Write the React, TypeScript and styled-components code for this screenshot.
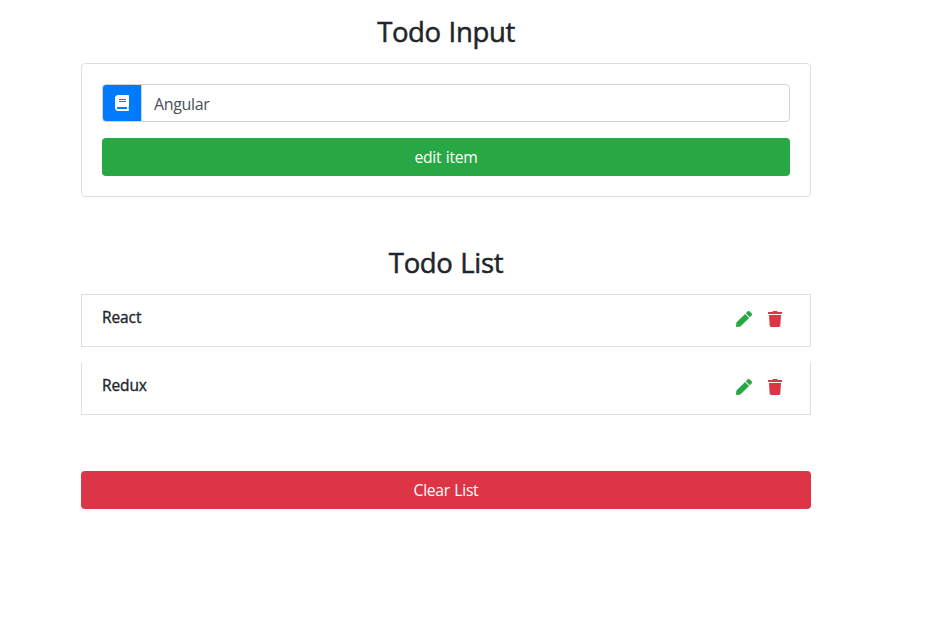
import React from "react";
import styled, { createGlobalStyle } from "styled-components";
import { FaBook, FaPen, FaTrash } from "react-icons/fa";

const GlobalStyle = createGlobalStyle`
  *, *::before, *::after { box-sizing: border-box; }
  body {
    margin: 0;
    background: #fff;
    color: #212529;
    font-family: "Segoe UI", "Open Sans", "Noto Sans", sans-serif;
    font-size: 16px;
    line-height: 1.5;
  }
`;

const Page = styled.main`
  width: 730px;
  margin-left: 81px;
  padding-top: 15px;
  display: flex;
  flex-direction: column;
`;

const Title = styled.h3`
  margin: 0;
  height: 34px;
  font-size: 27.5px;
  line-height: 34px;
  font-weight: 400;
  letter-spacing: -0.35px;
  word-spacing: 1px;
  -webkit-text-stroke: 0.5px currentColor;
  text-align: center;
  white-space: nowrap;
`;

const Card = styled.form`
  margin: 14px 0 49px;
  height: 134px;
  padding: 20px;
  border: 1px solid #dfdfdf;
  border-radius: 4px;
`;

const InputGroup = styled.div`
  display: flex;
  height: 38px;
  margin-bottom: 16px;
`;

const Addon = styled.span`
  width: 40px;
  display: flex;
  align-items: center;
  justify-content: center;
  color: #fff;
  background: #007bff;
  border: 1px solid #ced4da;
  border-radius: 4px 0 0 4px;
`;

const Field = styled.input`
  flex: 1;
  min-width: 0;
  margin-left: -1px;
  padding: 7px 12px 5px;
  border: 1px solid #ced4da;
  border-radius: 0 4px 4px 0;
  font: inherit;
  font-size: 16px;
  letter-spacing: -0.35px;
  color: #495057;
  outline: none;
`;

const Button = styled.button<{ $tone: string }>`
  display: block;
  width: 100%;
  height: 38px;
  padding: 2px 0 0;
  border: 0;
  border-radius: 4px;
  background: ${(p) => p.$tone};
  color: #fff;
  font: inherit;
  font-size: 15.7px;
  letter-spacing: -0.3px;
  word-spacing: 0.7px;
`;

const List = styled.ul`
  list-style: none;
  margin: 14px 0 56px;
  padding: 0;
  display: flex;
  flex-direction: column;
  gap: 16px;
`;

const Item = styled.li`
  display: flex;
  justify-content: space-between;
  height: 52px;
  padding: 12px 20px;
  border: 1px solid #dfdfdf;
  border-top: 0;
  &:first-child { height: 53px; border-top: 1px solid #dfdfdf; }
`;

const ItemTitle = styled.h6`
  margin: 0;
  font-size: 15.5px;
  line-height: 20px;
  font-weight: 400;
  letter-spacing: -0.1px;
  -webkit-text-stroke: 0.35px currentColor;
`;

const Actions = styled.div`
  display: flex;
  gap: 16px;
  padding: 4px 8px 0 0;
`;

const Action = styled.span<{ $tone: string }>`
  display: flex;
  height: 16px;
  color: ${(p) => p.$tone};
`;

const TrashIcon = styled(FaTrash)`
  width: 14px;
  height: 16px;
`;

export default function App() {
  return (
    <>
      <GlobalStyle />
      <Page>
        <Title>Todo Input</Title>
        <Card>
          <InputGroup>
            <Addon><FaBook size={16} /></Addon>
            <Field defaultValue="Angular" />
          </InputGroup>
          <Button type="button" $tone="#28a745">edit item</Button>
        </Card>
        <Title>Todo List</Title>
        <List>
          {["React", "Redux"].map((name) => (
            <Item key={name}>
              <ItemTitle>{name}</ItemTitle>
              <Actions>
                <Action $tone="#28a745"><FaPen size={16} /></Action>
                <Action $tone="#dc3545"><TrashIcon /></Action>
              </Actions>
            </Item>
          ))}
        </List>
        <Button type="button" $tone="#dc3545">Clear List</Button>
      </Page>
    </>
  );
}
